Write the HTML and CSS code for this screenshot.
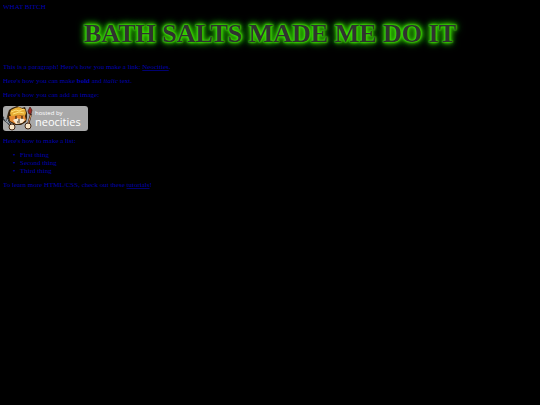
FILE: index.html
```html
<!DOCTYPE html>
<html lang="en">
<head>
<meta charset="utf-8">
<title>Bath Salts Made Me Do It</title>
<link rel="stylesheet" href="styles.css">
</head>
<body>
<div class="note">WHAT BITCH</div>
<h1 class="banner">BATH SALTS MADE ME DO IT</h1>
<main class="content">
<p>This is a paragraph! Here's how you make a link: <a href="#neocities">Neocities</a>.</p>
<p>Here's how you can make <strong>bold</strong> and <em>italic</em> text.</p>
<p>Here's how you can add an image:</p>
<svg class="badge" viewBox="0 0 85 25" role="img" aria-label="hosted by neocities">
  <rect width="85" height="25" rx="3" fill="#a9a9a9"/>
  <path d="M0 10l3 4 1-3 3 5 4 5-2 2-5-6-4-3z" fill="#30343a"/>
  <path d="M1 12l3 4 1 0 4 5M4 13l1 3" fill="none" stroke="#aab4bd"/>
  <path d="M5 7l1-3 3-2 5-2 5 2 3-1 2 6 0 5-1 4-5 3-6 0-5-3-3-5z" fill="#35210c"/>
  <path d="M7 7l1-3 4-2 4-1 4 2 2 0 1 4-1 3-6-1-8 2z" fill="#e6ad35"/>
  <path d="M8 6l5-2 3 1 5-2M10 8l6-2 5 1" fill="none" stroke="#ffe078"/>
  <path d="M6 10l5 0 4-1 7 1 1 4-4 3-6 1-6-3z" fill="#e78b32"/>
  <path d="M10 14l4-2 2 1 3-1 3 2-3 3-6 1z" fill="#f7e8cf"/>
  <path d="M13 10v3M19 10v3M15 14h2M14 16h3" stroke="#33210f" stroke-width="1.2"/>
  <circle cx="9" cy="21" r="3" fill="#f9e6c7" stroke="#422817"/>
  <path d="M25 19l3-11" stroke="#3b2118" stroke-width="2"/>
  <path d="M25 18l3-9" stroke="#cf9560"/>
  <path d="M26 8l-1-3 2-4 2 3-1 4z" fill="#9f2920" stroke="#421916" stroke-width=".7"/>
  <circle cx="25" cy="20" r="3" fill="#f9e6c7" stroke="#422817"/>
  <text class="hosted" x="32" y="9">hosted by</text>
  <text class="brand" x="32" y="20">neocities</text>
</svg>
<p>Here's how to make a list:</p>
<ul>
<li>First thing</li>
<li>Second thing</li>
<li>Third thing</li>
</ul>
<p>To learn more HTML/CSS, check out these <a href="#tutorials">tutorials</a>!</p>
</main>
</body>
</html>
```
FILE: styles.css
```css
body {
  margin: 3px;
  background: #000;
  color: #0000b0;
  font: 7px/8px "Liberation Serif", serif;
}
.banner {
  margin: 3px 0 9px;
  color: #303230;
  font: 900 26px/40px "Liberation Serif", serif;
  text-align: center;
  -webkit-text-stroke: 2px #1c261c;
  paint-order: stroke fill;
  text-shadow: 0 0 2px #3fe800, 0 0 3px #3ce000, 0 0 4px #39d800, 0 0 6px #32c800, 0 0 8px #2db400, 0 0 10px #198000;
}
p {
  margin: 0 0 6px;
}
a {
  color: inherit;
  text-decoration-color: #000070;
}
.badge {
  display: block;
  width: 85px;
  height: 25px;
  margin: 7px 0 6px;
}
.badge text {
  fill: #fff;
  font-family: "Open Sans", sans-serif;
}
.badge .hosted {
  font-size: 6px;
}
.badge .brand {
  font-size: 11px;
}
ul {
  margin: 0 0 6px;
  padding-left: 17px;
  list-style: none;
}
li::before {
  content: "•";
  display: inline-block;
  width: 7px;
  margin-left: -7px;
}
```
